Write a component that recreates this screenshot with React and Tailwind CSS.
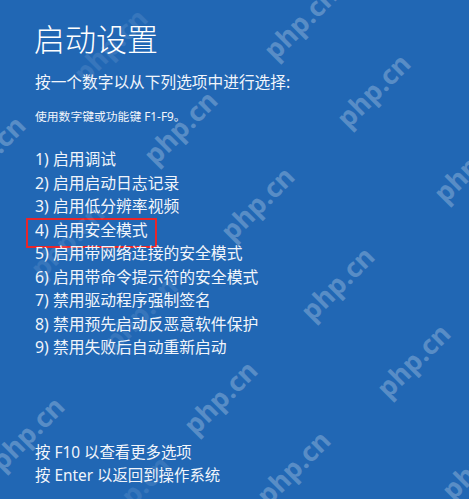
const items = [
  '1) 启用调试',
  '2) 启用启动日志记录',
  '3) 启用低分辨率视频',
  '4) 启用安全模式',
  '5) 启用带网络连接的安全模式',
  '6) 启用带命令提示符的安全模式',
  '7) 禁用驱动程序强制签名',
  '8) 禁用预先启动反恶意软件保护',
  '9) 禁用失败后自动重新启动',
]

// watermark overlay, centres taken from the picture
const marks = [
  'left-[300px] top-[22px] text-white/25',
  'left-[110px] top-[45px] text-white/10',
  'left-[180px] top-[127px] text-white/25',
  'left-[373px] top-[90px] text-white/25',
  'left-[-12px] top-[152px] text-white/25',
  'left-[470px] top-[165px] text-white/25',
  'left-[257px] top-[203px] text-white/25',
  'left-[67px] top-[240px] text-white/10',
  'left-[337px] top-[283px] text-white/25',
  'left-[140px] top-[313px] text-white/10',
  'left-[413px] top-[360px] text-white/25',
  'left-[220px] top-[397px] text-white/25',
  'left-[27px] top-[433px] text-white/25',
  'left-[293px] top-[467px] text-white/25',
  'left-[133px] top-[492px] text-white/10',
  'left-[478px] top-[462px] text-white/25',
]

export default function App() {
  return (
    <div
      className="relative w-[469px] h-[499px] overflow-hidden bg-[#2167b4] text-[#f1f5fb] flex flex-col pl-[35px] pb-[12px]"
      style={{ fontFamily: '"Noto Sans", "Noto Sans CJK SC", sans-serif' }}
    >
      <h1 className="mt-[19px] text-[31px] leading-[40px] font-light text-white -ml-[1px]">启动设置</h1>
      <p className="mt-[11px] text-[15.7px] leading-[24px]">按一个数字以从下列选项中进行选择:</p>
      <p className="mt-[12px] text-[11.8px] leading-[20px]">使用数字键或功能键 F1-F9。</p>

      <ul className="mt-[22px]">
        {items.map((t, i) => (
          <li key={i} className="relative text-[15.8px] leading-[23.5px]">
            {t}
            {i === 3 && (
              <span className="absolute left-[-9px] top-[-1px] w-[131px] h-[30px] border-2 border-[#e8262a]" />
            )}
          </li>
        ))}
      </ul>

      <div className="mt-auto text-[15.4px] leading-[23px]">
        <p>按 F10 以查看更多选项</p>
        <p>按 Enter 以返回到操作系统</p>
      </div>

      {marks.map((c, i) => (
        <span
          key={i}
          className={`pointer-events-none absolute -translate-x-1/2 -translate-y-1/2 -rotate-45 font-bold text-[27px] leading-none whitespace-nowrap ${c}`}
        >
          php.cn
        </span>
      ))}
    </div>
  )
}
